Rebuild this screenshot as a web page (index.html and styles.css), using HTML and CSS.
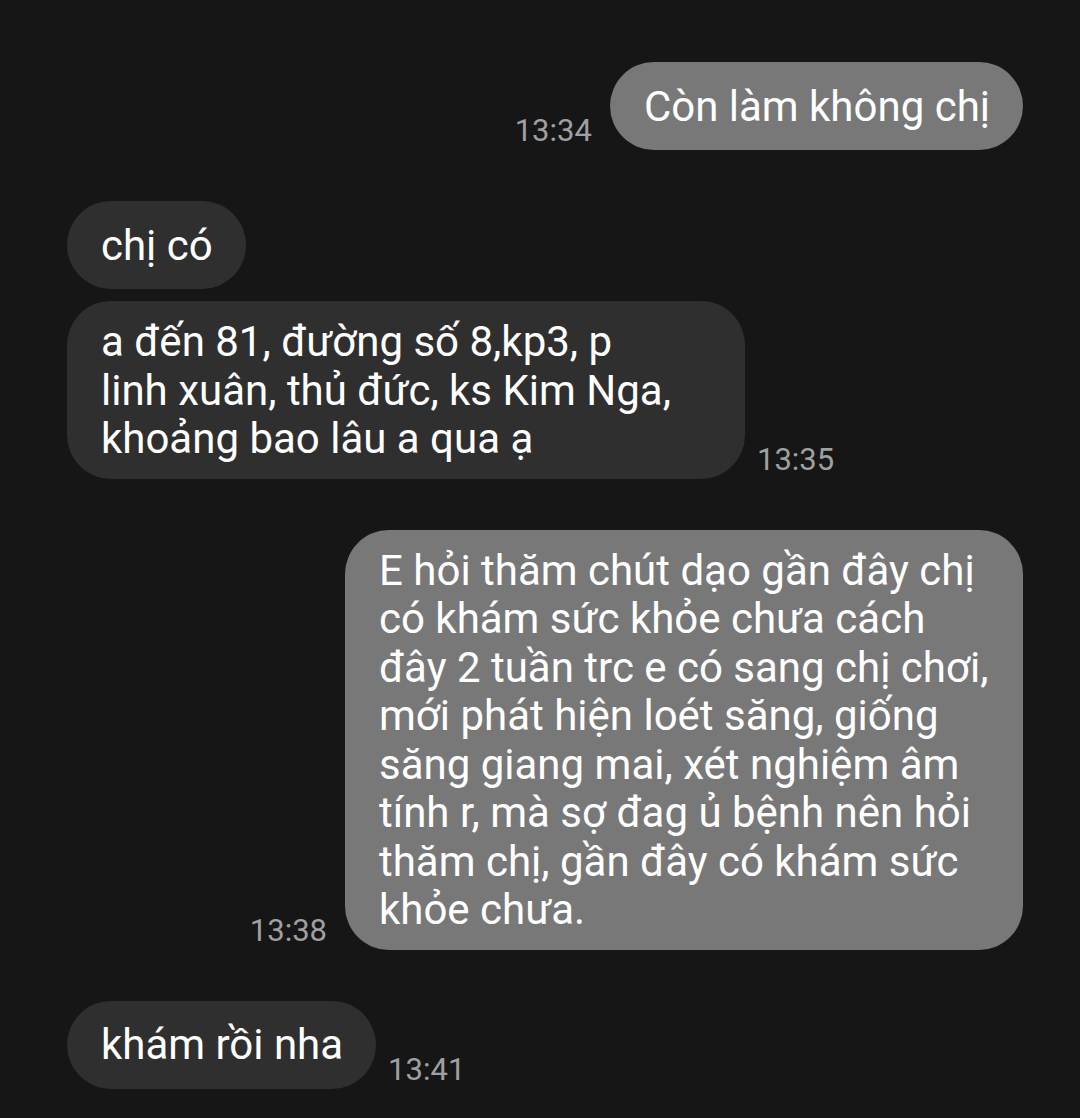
FILE: index.html
```html
<!DOCTYPE html>
<html lang="vi">
<head>
<meta charset="utf-8">
<title>Tin nhắn</title>
<link rel="stylesheet" href="styles.css">
</head>
<body>
<main class="chat">
  <div class="row sent first">
    <span class="time">13:34</span>
    <div class="bubble out"><span class="text">Còn làm không chị</span></div>
  </div>
  <div class="row recv">
    <div class="bubble in"><span class="text">chị có</span></div>
  </div>
  <div class="row recv close">
    <div class="bubble in wide"><span class="text">a đến 81, đường số 8,kp3, p<br>linh xuân, thủ đức, ks Kim Nga,<br>khoảng bao lâu a qua ạ</span></div>
    <span class="time">13:35</span>
  </div>
  <div class="row sent">
    <span class="time">13:38</span>
    <div class="bubble out wide"><span class="text">E hỏi thăm chút dạo gần đây chị<br>có khám sức khỏe chưa cách<br>đây 2 tuần trc e có sang chị chơi,<br>mới phát hiện loét săng, giống<br>săng giang mai, xét nghiệm âm<br>tính r, mà sợ đag ủ bệnh nên hỏi<br>thăm chị, gần đây có khám sức<br>khỏe chưa.</span></div>
  </div>
  <div class="row recv">
    <div class="bubble in"><span class="text">khám rồi nha</span></div>
    <span class="time">13:41</span>
  </div>
</main>
</body>
</html>
```

FILE: styles.css
```css
html, body {
  margin: 0;
  padding: 0;
  background: #161616;
}
body {
  width: 1080px;
  height: 1118px;
  overflow: hidden;
  font-family: Roboto, "Noto Sans", sans-serif;
}
.chat {
  display: flex;
  flex-direction: column;
  padding: 62px 57px 0 67px;
}
.row {
  display: flex;
  align-items: flex-end;
  margin-top: 51px;
}
.row.first { margin-top: 0; }
.row.close { margin-top: 12px; }
.row.sent { justify-content: flex-end; gap: 18px; }
.row.recv { justify-content: flex-start; gap: 12px; }
.bubble {
  box-sizing: border-box;
  min-height: 88px;
  padding: 17px 33px 15px 34px;
  border-radius: 44px;
  font-size: 42px;
  line-height: 48.5px;
  color: #ffffff;
  display: flex;
  align-items: center;
}
.bubble.wide {
  width: 678px;
}
.bubble.out { background: #787878; }
.bubble.in { background: #2f2f2f; }
.text { display: block; }
.time {
  font-size: 31px;
  line-height: 34px;
  color: #a0a0a0;
  margin-bottom: 2px;
  white-space: nowrap;
}
```
